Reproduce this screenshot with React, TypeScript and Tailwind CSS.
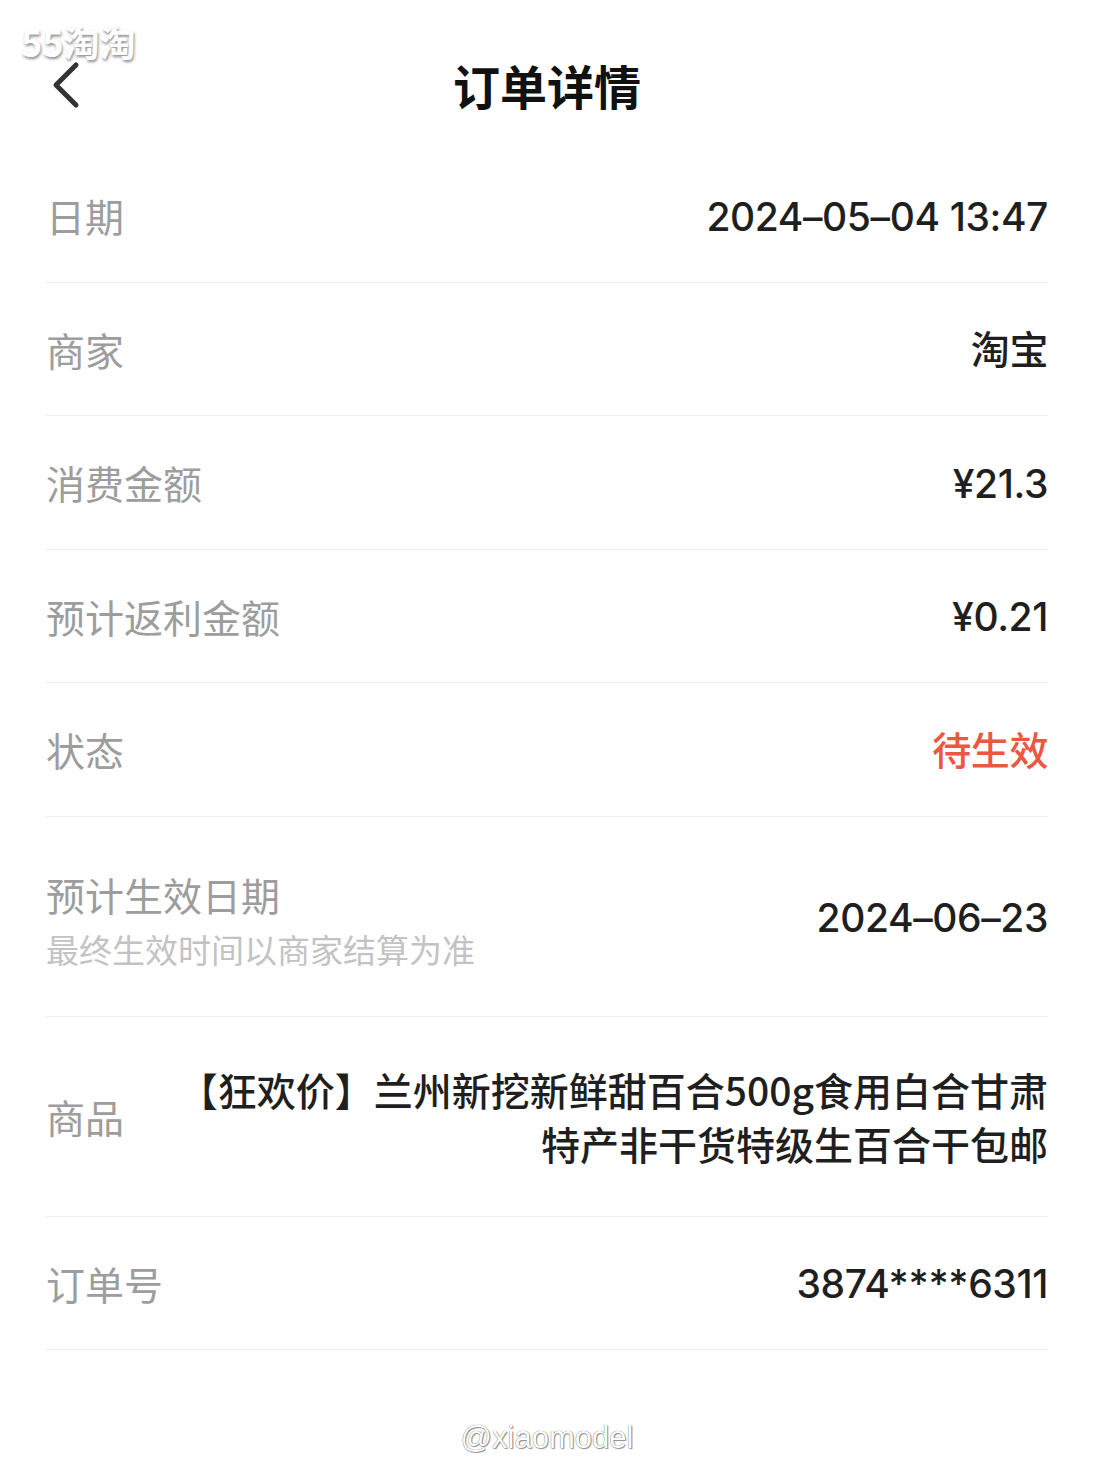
import { ReactNode } from 'react';

const cjk = '"Noto Sans CJK SC", "Noto Sans", sans-serif';
const num = 'Inter, "Noto Sans CJK SC", sans-serif';

interface RowProps {
  label: ReactNode;
  children: ReactNode;
  tall?: boolean;
}

function Row({ label, children, tall }: RowProps) {
  return (
    <div
      className={`flex items-center justify-between border-b border-[#efefef] ${
        tall ? 'h-[200px]' : 'h-[133.5px]'
      }`}
    >
      <div className="shrink-0 text-[39px] leading-[52px] text-[#9d9d9d]">{label}</div>
      {children}
    </div>
  );
}

function Value({ children, red }: { children: ReactNode; red?: boolean }) {
  return (
    <div
      className={`pt-[3px] text-right text-[39px] leading-[52px] font-medium tracking-[-0.4px] ${
        red ? 'text-[#eb5741]' : 'text-[#1f1f1f]'
      }`}
      style={{ fontFamily: num }}
    >
      {children}
    </div>
  );
}

export default function App() {
  return (
    <div className="relative w-full min-h-[1479px] bg-white" style={{ fontFamily: cjk }}>
      {/* watermark top-left */}
      <div className="absolute left-[21px] top-[21px] text-[36px] font-bold leading-[40px] text-white [text-shadow:1px_2px_3px_rgba(0,0,0,0.45)]">
        55淘淘
      </div>

      {/* header */}
      <div className="grid h-[149px] grid-cols-[1fr_auto_1fr] items-center pt-[20px]">
        <button className="ml-[50px] flex h-[48px] w-[36px] items-center justify-start">
          <svg width="30" height="48" viewBox="0 0 30 48" fill="none">
            <polyline
              points="26,4 6,24 26,44"
              stroke="#333333"
              strokeWidth="5"
              strokeLinecap="round"
              strokeLinejoin="round"
            />
          </svg>
        </button>
        <h1 className="text-[47px] font-bold leading-[50px] text-[#111]">订单详情</h1>
        <div />
      </div>

      {/* details */}
      <div className="px-[46px]">
        <Row label="日期">
          <Value>2024–05–04 13:47</Value>
        </Row>
        <Row label="商家">
          <Value>淘宝</Value>
        </Row>
        <Row label="消费金额">
          <Value>¥21.3</Value>
        </Row>
        <Row label="预计返利金额">
          <Value>¥0.21</Value>
        </Row>
        <Row label="状态">
          <Value red>待生效</Value>
        </Row>
        <Row
          tall
          label={
            <div className="pt-[10px]">
              <div>预计生效日期</div>
              <div className="mt-[3px] text-[33px] leading-[52px] text-[#c3c3c3]">
                最终生效时间以商家结算为准
              </div>
            </div>
          }
        >
          <Value>2024–06–23</Value>
        </Row>
        <Row tall label="商品">
          <div className="min-w-0 flex-1 pl-[40px] text-right text-[39px] leading-[54px] font-medium text-[#1f1f1f]">
            【狂欢价】兰州新挖新鲜甜百合500g食用白合甘肃特产非干货特级生百合干包邮
          </div>
        </Row>
        <Row label="订单号">
          <Value>3874****6311</Value>
        </Row>
      </div>

      {/* watermark bottom */}
      <div
        className="pt-[70px] pb-[40px] text-center text-[31px] leading-[36px] text-white [text-shadow:0_0_1px_rgba(0,0,0,0.7),1px_1px_1px_rgba(0,0,0,0.4)]"
        style={{ fontFamily: '"Liberation Sans", Arial, sans-serif' }}
      >
        @xiaomodel
      </div>
    </div>
  );
}
